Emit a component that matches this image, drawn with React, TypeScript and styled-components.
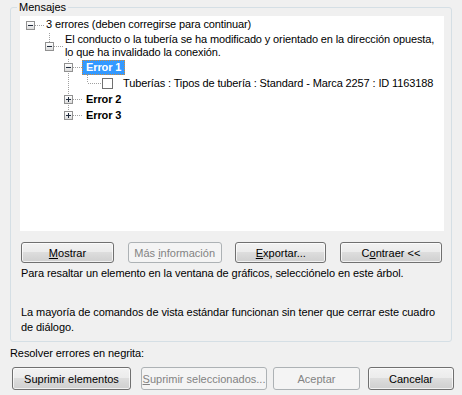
import React from "react";
import styled, { createGlobalStyle, css } from "styled-components";

const GlobalStyle = createGlobalStyle`
  html, body {
    margin: 0;
    padding: 0;
    background: #f0f0f0;
  }
  body {
    font-family: "Liberation Sans", Arial, sans-serif;
    font-size: 11px;
    color: #000;
  }
`;

const Dialog = styled.div`
  width: 462px;
  height: 395px;
  box-sizing: border-box;
  padding: 0 8px 0 10px;
  display: flex;
  flex-direction: column;
`;

const GroupBox = styled.fieldset`
  margin: 0;
  width: 442px;
  height: 342px;
  box-sizing: border-box;
  border: 1px solid #d5dfe5;
  border-radius: 3px;
  padding: 1px 7px 0 9px;
  min-inline-size: 0;
  display: flex;
  flex-direction: column;
`;

const Legend = styled.legend`
  padding: 0 2px;
  margin-left: -3px;
  line-height: 15px;
  font-size: 11px;
`;

const TreeBox = styled.div`
  height: 215px;
  flex: none;
  background: #fff;
  padding-left: 1px;
  font-size: 11px;
  letter-spacing: -0.12px;
`;

const Row = styled.div<{ $h: number }>`
  display: flex;
  align-items: center;
  height: ${(p) => p.$h}px;
  white-space: nowrap;
`;

const vLine = css`
  background-image: linear-gradient(to bottom, #a0a0a0 50%, transparent 50%);
  background-size: 1px 2px;
`;

const hLine = css`
  background-image: linear-gradient(to right, #a0a0a0 50%, transparent 50%);
  background-size: 2px 1px;
`;

const Guide = styled.div<{ $through: boolean }>`
  width: 19px;
  align-self: stretch;
  flex: none;
  position: relative;
  &::before {
    content: "";
    display: ${(p) => (p.$through ? "block" : "none")};
    position: absolute;
    left: 9px;
    width: 1px;
    top: 0;
    bottom: 0;
    ${vLine}
  }
`;

const Joint = styled.div<{ $up: boolean; $down: boolean }>`
  width: 19px;
  align-self: stretch;
  flex: none;
  position: relative;
  &::before {
    content: "";
    display: ${(p) => (p.$up || p.$down ? "block" : "none")};
    position: absolute;
    left: 9px;
    width: 1px;
    top: ${(p) => (p.$up ? "0" : "50%")};
    bottom: ${(p) => (p.$down ? "0" : "50%")};
    ${vLine}
  }
  &::after {
    content: "";
    position: absolute;
    left: 10px;
    right: -4px;
    top: 50%;
    height: 1px;
    ${hLine}
  }
`;

const Expander = styled.span<{ $open: boolean }>`
  position: absolute;
  z-index: 1;
  left: 5px;
  top: 50%;
  margin-top: -4px;
  width: 9px;
  height: 9px;
  box-sizing: border-box;
  border: 1px solid #919191;
  background: linear-gradient(to bottom, #ffffff, #dcdcdc);
  &::before {
    content: "";
    position: absolute;
    left: 1px;
    top: 3px;
    width: 5px;
    height: 1px;
    background: #1f2a3c;
  }
  &::after {
    content: "";
    display: ${(p) => (p.$open ? "none" : "block")};
    position: absolute;
    left: 3px;
    top: 1px;
    width: 1px;
    height: 5px;
    background: #1f2a3c;
  }
`;

const CheckBox = styled.span`
  width: 11px;
  height: 11px;
  box-sizing: border-box;
  margin-left: 5px;
  margin-right: 4px;
  flex: none;
  border: 1px solid #707070;
  background: #fff;
`;

const Label = styled.span<{ $bold?: boolean; $selected?: boolean }>`
  margin-left: ${(p) => (p.$bold ? 4 : 3)}px;
  padding: 0 ${(p) => (p.$bold ? 3 : 2)}px;
  line-height: 13px;
  border: 1px solid transparent;
  font-weight: ${(p) => (p.$bold ? "bold" : "normal")};
  ${(p) =>
    p.$selected &&
    css`
      background: #3399ff;
      color: #fff;
      border: 1px dotted #d08a3a;
    `}
`;

const ButtonBar = styled.div<{ $top: number; $left: number; $right: number; $spread?: boolean }>`
  display: flex;
  justify-content: ${(p) => (p.$spread ? "space-between" : "flex-start")};
  margin-top: ${(p) => p.$top}px;
  padding: 0 ${(p) => p.$right}px 0 ${(p) => p.$left}px;
`;

const Button = styled.button<{ $w: number; $h: number; $ml?: number }>`
  width: ${(p) => p.$w}px;
  height: ${(p) => p.$h}px;
  margin: 0 0 0 ${(p) => p.$ml ?? 0}px;
  padding: 0;
  flex: none;
  box-sizing: border-box;
  font-family: "Liberation Sans", Arial, sans-serif;
  font-size: 11px;
  color: #000;
  border: 1px solid #707070;
  border-radius: 3px;
  background: linear-gradient(to bottom, #f2f2f2 0%, #ebebeb 50%, #dddddd 50%, #cfcfcf 100%);
  box-shadow: inset 0 0 0 1px rgba(255, 255, 255, 0.7);
  &:disabled {
    color: #838383;
    border-color: #adb2b5;
    background: #f4f4f4;
    box-shadow: none;
  }
  u {
    text-decoration-thickness: 1px;
    text-underline-offset: 1px;
  }
`;

const Hint = styled.div<{ $top: number; $left?: number }>`
  margin-top: ${(p) => p.$top}px;
  padding-left: ${(p) => p.$left ?? 0}px;
  line-height: 15px;
  white-space: nowrap;
  letter-spacing: -0.08px;
`;

type TreeNode = {
  id: string;
  label: React.ReactNode;
  h: number;
  bold?: boolean;
  selected?: boolean;
  checkbox?: boolean;
  expanded?: boolean;
  children?: TreeNode[];
};

const tree: TreeNode[] = [
  {
    id: "root",
    label: "3 errores (deben corregirse para continuar)",
    h: 17,
    expanded: true,
    children: [
      {
        id: "msg",
        label: (
          <>
            El conducto o la tubería se ha modificado y orientado en la dirección opuesta,
            <br />
            lo que ha invalidado la conexión.
          </>
        ),
        h: 26,
        expanded: true,
        children: [
          {
            id: "e1",
            label: "Error 1",
            h: 16,
            bold: true,
            selected: true,
            expanded: true,
            children: [
              {
                id: "e1a",
                label: "Tuberías : Tipos de tubería : Standard - Marca 2257 : ID 1163188",
                h: 16,
                checkbox: true,
              },
            ],
          },
          { id: "e2", label: "Error 2", h: 16, bold: true, children: [{ id: "e2a", label: "", h: 16 }] },
          { id: "e3", label: "Error 3", h: 16, bold: true, children: [{ id: "e3a", label: "", h: 16 }] },
        ],
      },
    ],
  },
];

const renderRows = (nodes: TreeNode[], guides: boolean[], root: boolean): React.ReactNode[] =>
  nodes.flatMap((n, i) => {
    const last = i === nodes.length - 1;
    const hasKids = !!n.children?.length;
    const row = (
      <Row key={n.id} $h={n.h}>
        {guides.map((g, k) => (
          <Guide key={k} $through={g} />
        ))}
        <Joint $up={!(root && i === 0)} $down={!last}>
          {hasKids && <Expander $open={!!n.expanded} />}
        </Joint>
        {n.checkbox && <CheckBox />}
        <Label $bold={n.bold} $selected={n.selected}>
          {n.label}
        </Label>
      </Row>
    );
    const kids = hasKids && n.expanded ? renderRows(n.children!, [...guides, !last], false) : [];
    return [row, ...kids];
  });

const App: React.FC = () => {
  return (
    <>
      <GlobalStyle />
      <Dialog>
        <GroupBox>
          <Legend>Mensajes</Legend>
          <TreeBox>{renderRows(tree, [], true)}</TreeBox>
          <ButtonBar $top={11} $left={1} $right={2} $spread>
            <Button $w={93} $h={21}>
              <u>M</u>ostrar
            </Button>
            <Button $w={94} $h={21} disabled>
              Más <u>i</u>nformación
            </Button>
            <Button $w={91} $h={21}>
              <u>E</u>xportar...
            </Button>
            <Button $w={102} $h={21}>
              C<u>o</u>ntraer &lt;&lt;
            </Button>
          </ButtonBar>
          <Hint $top={3} $left={1}>
            Para resaltar un elemento en la ventana de gráficos, selecciónelo en este árbol.
          </Hint>
          <Hint $top={24} $left={1}>
            La mayoría de comandos de vista estándar funcionan sin tener que cerrar este cuadro
            <br />
            de diálogo.
          </Hint>
        </GroupBox>
        <Hint $top={4}>Resolver errores en negrita:</Hint>
        <ButtonBar $top={6} $left={2} $right={0}>
          <Button $w={119} $h={23}>
            Suprimir elementos
          </Button>
          <Button $w={126} $h={23} $ml={10} disabled>
            <u>S</u>uprimir seleccionados...
          </Button>
          <Button $w={87} $h={23} $ml={6} disabled>
            Aceptar
          </Button>
          <Button $w={86} $h={23} $ml={8}>
            Cancelar
          </Button>
        </ButtonBar>
      </Dialog>
    </>
  );
};

export default App;
